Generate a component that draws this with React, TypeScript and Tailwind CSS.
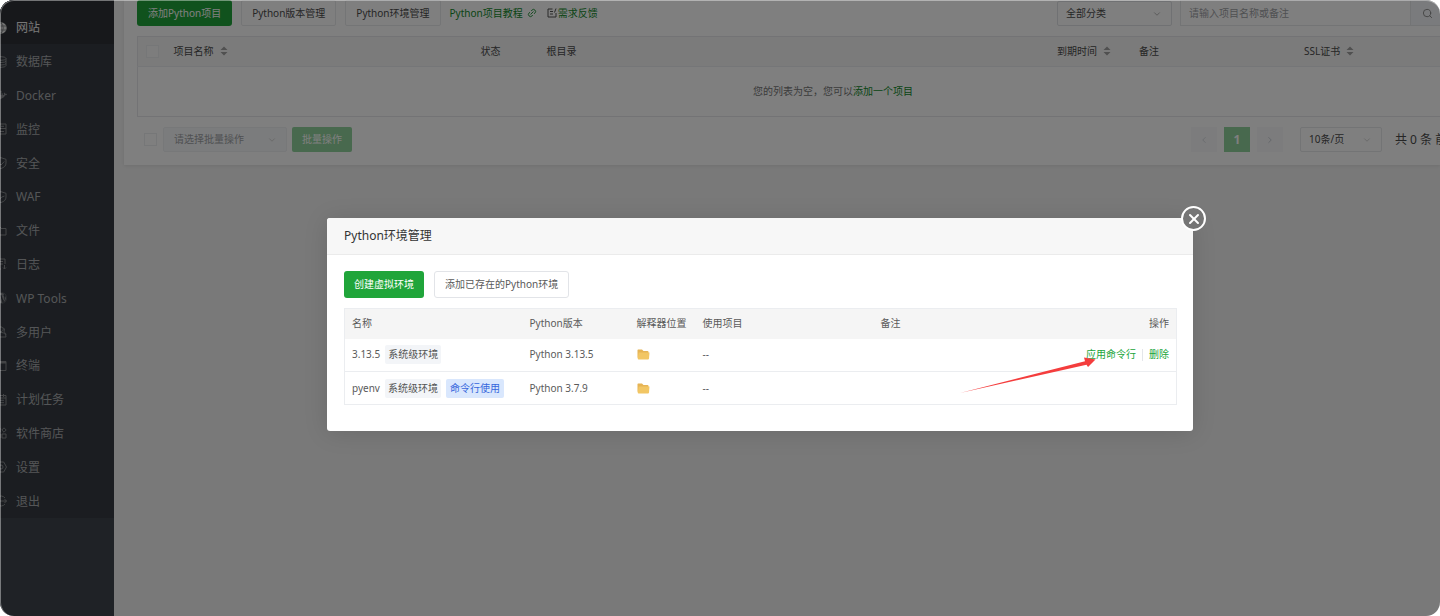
import type { ReactNode } from "react";
import { ChevronDown, ChevronLeft, ChevronRight, Link2, Search, X } from "lucide-react";
import { FaDocker, FaWordpress } from "react-icons/fa";

function LineIcon({ children }: { children: ReactNode }) {
  return (
    <svg viewBox="0 0 12 12" className="size-3 shrink-0 opacity-70" fill="none" stroke="currentColor" strokeWidth="1">
      {children}
    </svg>
  );
}

const menu: { label: string; icon: ReactNode }[] = [
  {
    label: "网站",
    icon: (
      <svg viewBox="0 0 12 12" className="size-3 shrink-0">
        <circle cx="6" cy="6" r="5.700" fill="#e4e4e4" />
        <path d="M.5 4H11.500M.5 8H11.500M6 .5V11.500M6 .5Q1.500 6 6 11.500Q10.500 6 6 .5" fill="none" stroke="#55585c" strokeWidth=".6" />
      </svg>
    ),
  },
  {
    label: "数据库",
    icon: (
      <LineIcon>
        <ellipse cx="6" cy="2.500" rx="5" ry="1.800" />
        <path d="M1 2.500v7q0 1.800 5 1.800t5-1.800v-7M1 5q0 1.500 5 1.500T11 5M1 7.500Q1 9 6 9t5-1.500" />
      </LineIcon>
    ),
  },
  { label: "Docker", icon: <FaDocker className="size-3 shrink-0 opacity-70" /> },
  { label: "监控", icon: <LineIcon><path d="M1 1h10v10H1ZM1 5.500h10M6 3.300h3M3 8.500h6" /></LineIcon> },
  { label: "安全", icon: <LineIcon><path d="M6 .7 11 2.300V6q0 4-5 5.500Q1 10 1 6V2.300ZM3.500 5.500 6 8l3.300-3.500" /></LineIcon> },
  { label: "WAF", icon: <LineIcon><path d="M6 .7 11 2.300V6q0 4-5 5.500Q1 10 1 6V2.300ZM3 5l2 2.500L7 6l2.500-1" /></LineIcon> },
  { label: "文件", icon: <LineIcon><path d="M1 2h4l1 1.500h5V10H1Z" /></LineIcon> },
  { label: "日志", icon: <LineIcon><path d="M10 6V1H1v10h5M3 3.500h5M3 6h5M9.500 7v4M8 9.500 9.500 11 11 9.500" /></LineIcon> },
  { label: "WP Tools", icon: <FaWordpress className="size-3 shrink-0 opacity-70" /> },
  { label: "多用户", icon: <LineIcon><path d="M6 5.500a2.300 2.300 0 1 0-.1 0ZM1 11q0-4.500 5-4.500T11 11ZM8 1.500q2.500 1 1 4.200Q11 7 11 9" /></LineIcon> },
  { label: "终端", icon: <LineIcon><path d="M1 1.500h10v9H1ZM1 3h10M3 5.500 5 7 3 8.500" /><path d="M1 2.200h10" strokeWidth="1.600" /></LineIcon> },
  { label: "计划任务", icon: <LineIcon><path d="M1 1.500h10v9.500H1ZM1 4h10M3 6.300h6M3 8.700h6M8.500 0v3" /></LineIcon> },
  { label: "软件商店", icon: <LineIcon><path d="M1 1h4v4H1ZM1 7h4v4H1ZM7 7h4v4H7ZM9 .8 11.200 3 9 5.200 6.800 3Z" /></LineIcon> },
  { label: "设置", icon: <LineIcon><path d="M3.300 1h5.400l2.800 5-2.800 5H3.300L.5 6Z" /><circle cx="6" cy="6" r="2" /></LineIcon> },
  { label: "退出", icon: <LineIcon><path d="M10 3A5 5 0 1 0 10 9M5 6h6.500M9.500 4l2 2-2 2" /></LineIcon> },
];

const environments = [
  { name: "3.13.5", version: "Python 3.13.5", active: false },
  { name: "pyenv", version: "Python 3.7.9", active: true },
];

function Sidebar() {
  return (
    <nav className="w-[114px] shrink-0 overflow-hidden bg-[#3e454c] text-[12px] text-[#a9abae]">
      <ul className="grid h-[518px] auto-rows-fr bg-[#363b42] pt-[11px] shadow-[inset_0_44px_#2e3036]">
        {menu.map((item, i) => (
          <li key={item.label} className="flex">
            <a
              href="#"
              className={
                i === 0
                  ? "-ml-[5px] flex flex-1 items-center gap-[9px] text-[#eeeeee]"
                  : "-ml-[5px] flex flex-1 items-center gap-[9px]"
              }
            >
              {item.icon}
              {item.label}
            </a>
          </li>
        ))}
      </ul>
    </nav>
  );
}

function SortIcon() {
  return (
    <svg viewBox="0 0 8 10" className="ml-1.5 inline-block h-[10px] w-2 align-[-1px] text-[#a0a0a0]" fill="currentColor">
      <path d="M4 .5 7.500 4H.5ZM4 9.500.5 6h7Z" />
    </svg>
  );
}

function Toolbar() {
  return (
    <div className="flex items-center whitespace-nowrap">
      <button className="h-[26px] rounded-[3px] bg-[#20a53a] px-[11px] text-white">添加Python项目</button>
      <button className="ml-[9px] h-[26px] rounded-[2px] border border-[#e9eaec] px-[10px]">Python版本管理</button>
      <button className="ml-[9px] h-[26px] rounded-[2px] border border-[#e9eaec] px-[10px]">Python环境管理</button>
      <a href="#" className="ml-[9px] flex items-center gap-1 text-[#128a2b]">
        Python项目教程
        <Link2 className="size-[10px] -rotate-45" strokeWidth={2} />
      </a>
      <a href="#" className="ml-[10px] flex items-center text-[#128a2b]">
        <svg viewBox="0 0 10 10" className="mr-px size-[10px] text-[#555]" fill="none" stroke="currentColor">
          <path d="M5.500 1H1v8h8V5M3 3.500h3M3 6h3M9 .5 7.500 4.500" />
        </svg>
        需求反馈
      </a>
      <div className="relative ml-auto w-[115px]">
        <select aria-label="分类" className="h-[25px] w-full appearance-none rounded-[2px] border border-[#e1e3e7] px-[8px]">
          <option>全部分类</option>
        </select>
        <ChevronDown className="pointer-events-none absolute top-2 right-[10px] size-[10px] text-[#aaa]" />
      </div>
      <div className="ml-2 flex h-[26px] w-[260px] border border-r-0 border-[#e6e8eb]">
        <input aria-label="搜索" placeholder="请输入项目名称或备注" className="min-w-0 flex-1 px-2 placeholder:text-[#a0a2a6]" />
        <button aria-label="搜索项目" className="flex w-[30px] items-center justify-center border-l border-[#e6e8eb] bg-[#f5f7fa] pl-[4px]">
          <Search className="size-[11px] text-[#888]" />
        </button>
      </div>
    </div>
  );
}

function ProjectTable() {
  return (
    <table className="mt-[10px] w-full table-fixed border-collapse border border-r-0 border-[#e6e7ea] text-left">
      <colgroup>
        <col className="w-[26px]" />
        <col className="w-[307px]" />
        <col className="w-[66px]" />
        <col />
        <col className="w-[82px]" />
        <col className="w-[165px]" />
        <col className="w-[146px]" />
      </colgroup>
      <thead>
        <tr className="h-[30px] bg-[#f6f6f6] whitespace-nowrap">
          <th className="pl-2">
            <input type="checkbox" aria-label="全选" className="block size-[13px] appearance-none border border-[#eceef1] bg-[#fafafa]" />
          </th>
          <th className="pl-[10px] font-normal">项目名称<SortIcon /></th>
          <th className="pl-[10px] font-normal">状态</th>
          <th className="pl-[10px] font-normal">根目录</th>
          <th className="pl-[10px] font-normal">到期时间<SortIcon /></th>
          <th className="pl-[10px] font-normal">备注</th>
          <th className="pl-[10px] font-normal">SSL证书<SortIcon /></th>
        </tr>
      </thead>
      <tbody>
        <tr className="h-[50px] border-t border-[#ebedf0]">
          <td colSpan={7} className="pl-[88px] text-center text-[#777]">
            您的列表为空，您可以<a href="#" className="text-[#128a2b]">添加一个项目</a>
          </td>
        </tr>
      </tbody>
    </table>
  );
}

function TableFooter() {
  return (
    <div className="mt-[10px] flex h-[25px] items-center pl-[7px] whitespace-nowrap">
      <input type="checkbox" aria-label="选择全部" className="size-[13px] appearance-none border border-[#eceef1]" />
      <div className="relative ml-[6px] w-[124px]">
        <select aria-label="批量操作" className="h-[25px] w-full appearance-none rounded-[2px] border border-[#eef0f3] bg-[#f7f9fb] px-[10px] text-[#a0a2a6]">
          <option>请选择批量操作</option>
        </select>
        <ChevronDown className="pointer-events-none absolute top-2 right-[10px] size-[10px] text-[#ccc]" />
      </div>
      <button className="ml-[5px] h-[25px] rounded-[2px] bg-[#90d29c] px-[10px] text-white">批量操作</button>
      <button aria-label="上一页" className="ml-auto flex h-[25px] w-[26px] items-center justify-center bg-[#f8f9fb] text-[#d0d3d8]">
        <ChevronLeft className="size-[10px]" />
      </button>
      <button className="ml-[7px] h-[25px] w-[26px] bg-[#90d29c] text-[12px] font-bold text-white">1</button>
      <button aria-label="下一页" className="ml-[7px] flex h-[25px] w-[26px] items-center justify-center bg-[#f8f9fb] text-[#c0c4cc]">
        <ChevronRight className="size-[10px]" />
      </button>
      <div className="relative ml-[17px] w-[82px]">
        <select aria-label="每页条数" className="h-[25px] w-full appearance-none rounded-[2px] border border-[#e6e8eb] px-[8px]">
          <option>10条/页</option>
        </select>
        <ChevronDown className="pointer-events-none absolute top-2 right-[10px] size-[10px] text-[#ccc]" />
      </div>
      <span className="ml-[13px] w-[45px] text-[12px]">共 0 条 前</span>
    </div>
  );
}

function EnvironmentTable() {
  return (
    <table className="mt-[10px] w-full table-fixed border-collapse border border-[#ebedf0] text-left">
      <colgroup>
        <col className="w-[178px]" />
        <col className="w-[107px]" />
        <col className="w-[66px]" />
        <col className="w-[178px]" />
        <col />
        <col className="w-[130px]" />
      </colgroup>
      <thead>
        <tr className="h-[30px] bg-[#f5f5f5] whitespace-nowrap">
          <th className="px-[7px] font-normal">名称</th>
          <th className="px-[7px] font-normal">Python版本</th>
          <th className="px-[7px] font-normal">解释器位置</th>
          <th className="px-[7px] font-normal">使用项目</th>
          <th className="px-[7px] font-normal">备注</th>
          <th className="px-[7px] text-right font-normal">操作</th>
        </tr>
      </thead>
      <tbody>
        {environments.map((env) => (
          <tr key={env.name} className="h-[33px] border-b border-[#ebedf0] whitespace-nowrap">
            <td className="px-[7px]">
              <div className="flex items-center">
                {env.name}
                <span className="ml-[5px] rounded-[2px] bg-[#f3f5f8] px-[3px] py-px leading-[17px] text-[#555]">系统级环境</span>
                {env.active && (
                  <span className="ml-[5px] rounded-[2px] bg-[#d9e7fd] px-1 py-px leading-[17px] text-[#3666dc]">命令行使用</span>
                )}
              </div>
            </td>
            <td className="px-[7px]">{env.version}</td>
            <td className="px-[7px]">
              <button aria-label="打开目录" className="block">
                <svg viewBox="0 0 13 11" className="block h-[11px] w-[13px]">
                  <path d="M1 .5h4l1.500 1.500h4q1 0 1 1V9H1Q.5 9 .5 8V1Z" fill="#e6b455" />
                  <path d="M1.700 3.500h10.800L12 9.500q-.1 1-1 1H1.700q-1 0-1-1Z" fill="#f2c664" />
                </svg>
              </button>
            </td>
            <td className="px-[7px]">--</td>
            <td />
            <td className="px-[7px]">
              {!env.active && (
                <div className="flex items-center justify-end text-[#20a53a]">
                  <a href="#">应用命令行</a>
                  <span className="mx-[6px] h-3 w-px bg-[#e4e6ea]" />
                  <a href="#">删除</a>
                </div>
              )}
            </td>
          </tr>
        ))}
      </tbody>
    </table>
  );
}

function EnvironmentDialog() {
  return (
    <div className="absolute inset-0 flex items-start bg-black/50 pt-[218px] pr-[247px] pl-[327px]">
      <section
        role="dialog"
        aria-label="Python环境管理"
        className="relative min-w-0 flex-1 rounded-[3px] bg-white text-[#5a5a5a] shadow-[0_2px_24px_rgba(0,0,0,0.12)]"
      >
        <h2 className="flex h-[37px] items-center rounded-t-[3px] border-b border-[#ebebeb] bg-[#f7f7f7] px-[17px] pb-px text-[12px] text-[#333]">
          Python环境管理
        </h2>
        <div className="pt-4 pr-4 pb-[26px] pl-[17px]">
          <div className="flex gap-[10px]">
            <button className="h-[27px] rounded-[3px] bg-[#20a53a] px-[10px] text-white">创建虚拟环境</button>
            <button className="h-[27px] rounded-[3px] border border-[#e2e4e8] px-[10px]">添加已存在的Python环境</button>
          </div>
          <EnvironmentTable />
        </div>
        <button
          aria-label="关闭"
          className="absolute -top-3 -right-[13px] flex size-[25px] items-center justify-center rounded-full border-2 border-white bg-[#757575] text-white"
        >
          <X className="size-4" strokeWidth={3} />
        </button>
        <svg viewBox="0 0 136 40" className="pointer-events-none absolute top-[136px] right-[97px] h-10 w-[136px]">
          <path d="M0 39 125 10 124 3.500 135 5.500 127.500 13 126 10.800Z" fill="none" />
          <path d="M0 39 125 7.300 124 3.500 135.500 5.500 128 13 126.500 10.800Z" fill="#f43d3d" />
        </svg>
      </section>
    </div>
  );
}

export default function App() {
  return (
    <div className="relative flex min-h-screen overflow-hidden rounded-[14px] bg-[#f2f2f2] font-['Noto_Sans','Noto_Sans_CJK_SC',sans-serif] text-[10px] leading-[15px] text-[#4c4c4c]">
      <Sidebar />
      <main className="min-w-0 flex-1 pl-[10px]">
        <div className="bg-white pb-[13px] pl-[13px] shadow-[0_1px_3px_rgba(0,0,0,0.08)]">
          <Toolbar />
          <ProjectTable />
          <TableFooter />
        </div>
      </main>
      <EnvironmentDialog />
      <div className="pointer-events-none absolute inset-0 rounded-[14px] border-t border-l border-white/40" />
    </div>
  );
}
